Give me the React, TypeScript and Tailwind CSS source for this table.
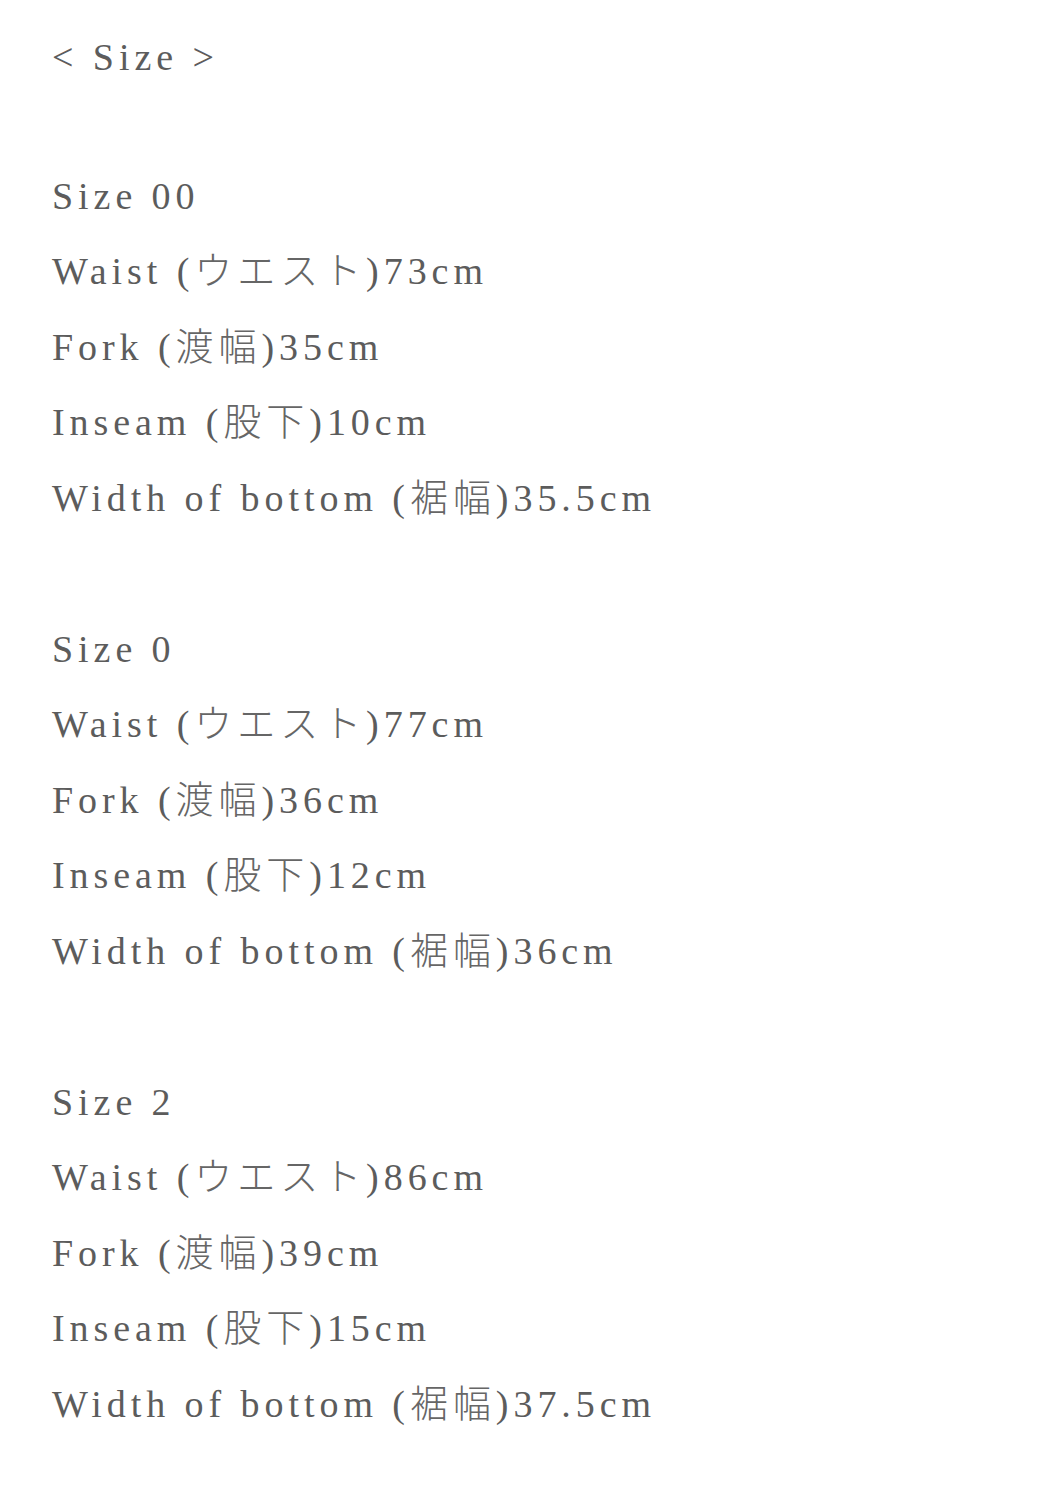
const groups = [
  {
    size: "Size 00",
    rows: [
      ["Waist", "ウエスト", "73cm"],
      ["Fork", "渡幅", "35cm"],
      ["Inseam", "股下", "10cm"],
      ["Width of bottom", "裾幅", "35.5cm"],
    ],
  },
  {
    size: "Size 0",
    rows: [
      ["Waist", "ウエスト", "77cm"],
      ["Fork", "渡幅", "36cm"],
      ["Inseam", "股下", "12cm"],
      ["Width of bottom", "裾幅", "36cm"],
    ],
  },
  {
    size: "Size 2",
    rows: [
      ["Waist", "ウエスト", "86cm"],
      ["Fork", "渡幅", "39cm"],
      ["Inseam", "股下", "15cm"],
      ["Width of bottom", "裾幅", "37.5cm"],
    ],
  },
];

export default function App() {
  return (
    <div
      className="min-h-[1500px] bg-white px-[52px] pt-[20px] text-[#5c5c5c] text-[38px] leading-[75.5px] tracking-[0.13em]"
      style={{ fontFamily: '"Liberation Serif", "Noto Sans CJK JP", serif' }}
    >
      <p>&lt; Size &gt;</p>
      <div className="mt-[63px] flex flex-col gap-[75.5px]">
        {groups.map((g) => (
          <div key={g.size}>
            <p>{g.size}</p>
            {g.rows.map(([label, jp, value]) => (
              <p key={label}>
                {label} (<span className="font-light text-[#666]">{jp}</span>){value}
              </p>
            ))}
          </div>
        ))}
      </div>
    </div>
  );
}
